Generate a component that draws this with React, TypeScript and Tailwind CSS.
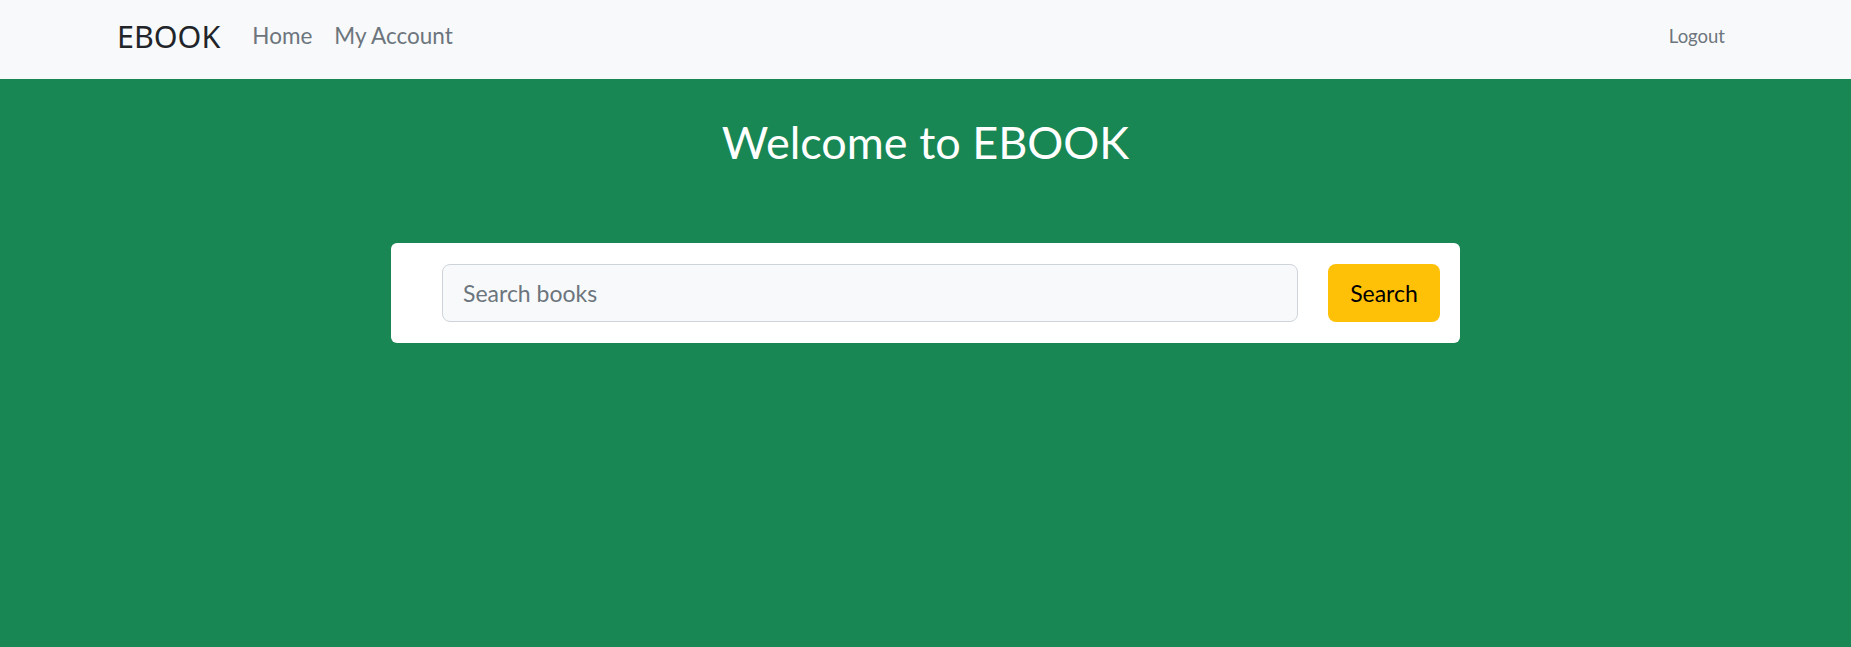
const App = () => {
  return (
    <div className="min-h-screen flex flex-col bg-[#198754]" style={{ fontFamily: "Lato, 'Noto Sans', sans-serif" }}>
      {/* Navbar */}
      <nav className="h-[79px] bg-[#f8f9fa] flex items-center pl-[117px] pr-[126px] pb-[7px]">
        <span className="text-[30.5px] text-[#212529] font-['Noto_Sans',sans-serif] leading-none">EBOOK</span>
        <a className="ml-[32px] text-[22.5px] text-[#6c757d] leading-none" href="#">Home</a>
        <a className="ml-[22px] text-[22.5px] text-[#6c757d] leading-none" href="#">My Account</a>
        <a className="ml-auto text-[18.5px] text-[#6c757d] leading-none" href="#">Logout</a>
      </nav>

      {/* Hero */}
      <main className="flex flex-col items-center">
        <h1 className="mt-[36px] text-[45px] leading-[1.2] text-white">Welcome to EBOOK</h1>
        <div className="mt-[74px] w-[1069px] bg-white rounded-md flex items-center pl-[51px] pr-[20px] py-[21px]">
          <input
            className="flex-1 h-[58px] bg-[#f8f9fa] border border-[#ced4da] rounded-lg px-[20px] text-[23px] placeholder:text-[#6c757d] outline-none"
            placeholder="Search books"
          />
          <button className="ml-[30px] h-[58px] w-[112px] bg-[#ffc107] rounded-lg text-[23px] text-black">Search</button>
        </div>
      </main>
    </div>
  );
};

export default App;
